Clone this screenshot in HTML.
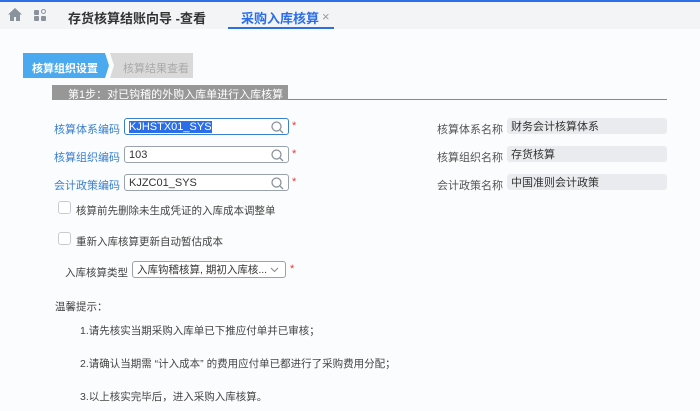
<!DOCTYPE html>
<html><head><meta charset="utf-8">
<style>
*{margin:0;padding:0;box-sizing:border-box}
body{width:700px;height:411px;overflow:hidden;background:#fbfcfd;font-family:"Liberation Sans","Noto Sans CJK SC",sans-serif;font-size:11px;color:#333;position:relative}
.a{position:absolute;white-space:nowrap}
.top{position:absolute;left:0;top:0;width:700px;height:2px;background:#2b6ee8}
.hdr{position:absolute;left:0;top:2px;width:700px;height:27px;background:#f3f4f6}
.inp{position:absolute;height:17px;border:1px solid #9aa2ad;border-radius:3px;background:#fff;font-size:11px;padding-left:4px;line-height:16px;color:#333}
.lbl{position:absolute;color:#3a7fd0;font-size:11px;text-align:right;width:80px}
.rl{position:absolute;color:#555;font-size:11px;text-align:right;width:80px}
.gb{position:absolute;left:507px;width:160px;height:16px;background:#e9ebee;border-radius:3px;padding-left:4px;line-height:18px;color:#333;font-size:11px}
.star{position:absolute;color:#e33;font-size:11px}
.cb{position:absolute;width:13px;height:13px;border:1px solid #c8ccd2;border-radius:3px;background:#fff}
.t{font-size:10.5px;color:#444}
</style></head><body>
<div class="top"></div>
<div class="hdr"></div>
<svg class="a" style="left:8px;top:8px" width="14" height="13" viewBox="0 0 14 13"><path d="M7 0L0 6.5h2V13h4V9h2v4h4V6.5h2z" fill="#8a929c"/></svg>
<div class="a" style="left:34px;top:10px;width:5px;height:5px;background:#8a929c;border-radius:1px"></div>
<div class="a" style="left:41px;top:9px;width:5px;height:5px;border:1px solid #8a929c;border-radius:50%;transform:rotate(45deg)"></div>
<div class="a" style="left:34px;top:16px;width:5px;height:5px;background:#8a929c;border-radius:1px"></div>
<div class="a" style="left:41px;top:16px;width:5px;height:5px;background:#8a929c;border-radius:1px"></div>
<div class="a" style="left:68px;top:8px;font-size:13px;color:#333;font-weight:bold">存货核算结账向导 -查看</div>
<div class="a" style="left:241px;top:8px;font-size:13px;color:#2b6ee8;font-weight:bold">采购入库核算</div>
<div class="a" style="left:322px;top:9px;font-size:13px;color:#999">×</div>
<div class="a" style="left:228px;top:27px;width:106px;height:2px;background:#2b6ee8"></div>

<svg class="a" style="left:22px;top:52px" width="175" height="27"><path d="M1 1H83L87 13.5 83 26H1z" fill="#4ba9ef"/><path d="M88 1H171V26H88L92 13.5z" fill="#d9d9d9"/></svg>
<div class="a" style="left:32px;top:60px;color:#fff;font-size:11px;font-weight:bold">核算组织设置</div>
<div class="a" style="left:123px;top:60px;color:#aaa;font-size:11px">核算结果查看</div>
<div class="a" style="left:52px;top:85px;width:236px;height:15px;background:#979797"></div>
<div class="a" style="left:288px;top:99px;width:379px;height:1px;background:#888"></div>
<div class="a" style="left:68px;top:86px;color:#fff;font-size:11px">第1步：对已钩稽的外购入库单进行入库核算</div>

<div class="lbl" style="left:40px;top:121px">核算体系编码</div>
<div class="inp" style="left:124px;top:118px;width:165px;border-color:#3a7fd0"><span style="background:#2b6ee8;color:#fff">KJHSTX01_SYS</span></div>
<div class="lbl" style="left:40px;top:149px">核算组织编码</div>
<div class="inp" style="left:124px;top:146px;width:165px">103</div>
<div class="lbl" style="left:40px;top:177px">会计政策编码</div>
<div class="inp" style="left:124px;top:174px;width:165px">KJZC01_SYS</div>
<svg class="a" style="left:271px;top:121px" width="13" height="13"><circle cx="5.5" cy="5.5" r="4.5" fill="none" stroke="#8a929c" stroke-width="1.3"/><path d="M9 9l3 3" stroke="#8a929c" stroke-width="1.3"/></svg>
<svg class="a" style="left:271px;top:149px" width="13" height="13"><circle cx="5.5" cy="5.5" r="4.5" fill="none" stroke="#8a929c" stroke-width="1.3"/><path d="M9 9l3 3" stroke="#8a929c" stroke-width="1.3"/></svg>
<svg class="a" style="left:271px;top:177px" width="13" height="13"><circle cx="5.5" cy="5.5" r="4.5" fill="none" stroke="#8a929c" stroke-width="1.3"/><path d="M9 9l3 3" stroke="#8a929c" stroke-width="1.3"/></svg>
<div class="star" style="left:292px;top:120px">*</div>
<div class="star" style="left:292px;top:148px">*</div>
<div class="star" style="left:292px;top:176px">*</div>

<div class="rl" style="left:423px;top:121px">核算体系名称</div>
<div class="gb" style="top:118px">财务会计核算体系</div>
<div class="rl" style="left:423px;top:149px">核算组织名称</div>
<div class="gb" style="top:146px">存货核算</div>
<div class="rl" style="left:423px;top:177px">会计政策名称</div>
<div class="gb" style="top:174px">中国准则会计政策</div>

<div class="cb" style="left:58px;top:201px"></div>
<div class="a t" style="left:76px;top:203px">核算前先删除未生成凭证的入库成本调整单</div>
<div class="cb" style="left:58px;top:232px"></div>
<div class="a t" style="left:76px;top:234px">重新入库核算更新自动暂估成本</div>

<div class="a t" style="left:65px;top:265px">入库核算类型</div>
<div class="inp" style="left:132px;top:261px;width:154px;height:17px;font-size:10.5px">入库钩稽核算, 期初入库核...</div>
<svg class="a" style="left:270px;top:267px" width="9" height="6"><path d="M1 1l3.5 3.5L8 1" fill="none" stroke="#888" stroke-width="1"/></svg>
<div class="star" style="left:290px;top:263px">*</div>

<div class="a t" style="left:55px;top:299px">温馨提示：</div>
<div class="a t" style="left:80px;top:323px">1.请先核实当期采购入库单已下推应付单并已审核；</div>
<div class="a t" style="left:80px;top:356px">2.请确认当期需 “计入成本” 的费用应付单已都进行了采购费用分配；</div>
<div class="a t" style="left:80px;top:389px">3.以上核实完毕后，进入采购入库核算。</div>
</body></html>
